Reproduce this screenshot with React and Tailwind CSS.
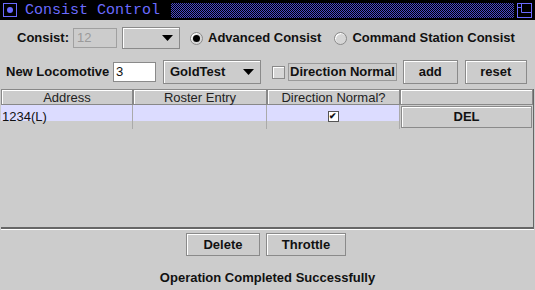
import React from 'react';

// raised swing-ish button
function Btn({ children, className = '' }) {
  return (
    <div className={`flex items-center justify-center border border-[#8a8a8a] shadow-[inset_1px_1px_0_#ffffff] bg-[#cccccc] font-bold text-[13px] text-[#111] ${className}`}>
      {children}
    </div>
  );
}

function Combo({ value, className = '' }) {
  return (
    <div className={`flex items-center justify-between border border-[#8a8a8a] shadow-[inset_1px_1px_0_#ffffff] bg-[#cccccc] pl-[6px] pr-[6px] ${className}`}>
      <span className="font-bold text-[13px] text-[#111]">{value}</span>
      <svg width="11" height="6" viewBox="0 0 11 6"><path d="M0 0h11L5.5 6z" fill="#000" /></svg>
    </div>
  );
}

function Radio({ checked }) {
  return (
    <div className="w-[13px] h-[13px] rounded-full border border-[#8a8a8a] bg-[#d6d6d6] shadow-[inset_1px_1px_0_#ffffff] flex items-center justify-center">
      {checked && <div className="w-[7px] h-[7px] rounded-full bg-black" />}
    </div>
  );
}

const cols = ['Address', 'Roster Entry', 'Direction Normal?', ''];

export default function App() {
  return (
    <div className="w-[535px] h-[290px] bg-[#cccccc] flex flex-col overflow-hidden font-['Liberation_Sans',sans-serif] text-[13px] text-[#111]">
      {/* title bar */}
      <div className="h-[20px] bg-black flex items-center shrink-0">
        <div className="ml-[3px] w-[14px] h-[14px] border border-[#6b6bff] flex items-center justify-center">
          <div className="w-[6px] h-[6px] rounded-full bg-[#6b6bff]" />
        </div>
        <span className="ml-[8px] w-[142px] font-['Liberation_Mono',monospace] text-[15px] leading-none text-[#6b6bff]">Consist Control</span>
        <div className="ml-[4px] flex-1 h-[15px] bg-[repeating-conic-gradient(#4646c8_0_25%,#000_0_50%)] bg-[length:2px_2px]" />
        <div className="mx-[2px] w-[17px] h-[17px] flex items-center justify-center">
          <svg width="15" height="15" viewBox="0 0 15 15">
            <rect x="0.5" y="0.5" width="14" height="14" fill="none" stroke="#6b6bff" />
            <path d="M4.5 0.5v9h10M0.5 4.5h4" fill="none" stroke="#6b6bff" />
          </svg>
        </div>
      </div>

      {/* consist row */}
      <div className="h-[36px] flex items-center shrink-0">
        <span className="ml-[17px] w-[56px] font-bold">Consist:</span>
        <div className="w-[44px] h-[20px] border border-[#a0a0a0] flex items-center pl-[3px] text-[#9a9a9a]">12</div>
        <Combo value="" className="ml-[5px] w-[58px] h-[22px]" />
        <div className="ml-[10px] flex items-center">
          <Radio checked />
          <span className="ml-[5px] font-bold">Advanced Consist</span>
        </div>
        <div className="ml-[13px] flex items-center">
          <Radio />
          <span className="ml-[5px] font-bold">Command Station Consist</span>
        </div>
      </div>

      {/* new locomotive row */}
      <div className="h-[32px] flex items-center shrink-0">
        <span className="ml-[6px] w-[107px] font-bold whitespace-nowrap">New Locomotive</span>
        <div className="w-[43px] h-[20px] border border-[#8a8a8a] bg-white flex items-center pl-[2px]">3</div>
        <Combo value="GoldTest" className="ml-[7px] w-[98px] h-[24px]" />
        <div className="ml-[11px] w-[13px] h-[13px] border border-[#8a8a8a] bg-[#d6d6d6] shadow-[inset_1px_1px_0_#ffffff]" />
        <span className="ml-[3px] px-[1px] border border-[#9a9a9a] font-bold leading-[16px] whitespace-nowrap">Direction Normal</span>
        <Btn className="ml-[6px] w-[55px] h-[24px]">add</Btn>
        <Btn className="ml-[7px] w-[62px] h-[24px]">reset</Btn>
      </div>

      {/* table */}
      <div className="mt-[1px] mx-[1px] h-[140px] shrink-0 border-b-2 border-b-[#666] border-r border-r-[#666] flex flex-col">
        <div className="grid grid-cols-[132px_134px_133px_1fr] h-[16px]">
          {cols.map((c, i) => (
            <div key={i} className="border border-[#888] shadow-[inset_1px_1px_0_#ffffff] flex items-center justify-center text-[13px] text-[#222] leading-none">{c}</div>
          ))}
        </div>
        <div className="grid grid-cols-[132px_134px_133px_1fr] h-[16px] bg-[#dcdcff]">
          <div className="pl-[1px] border-r border-[#aaa] flex items-center text-[13px] leading-none">1234(L)</div>
          <div className="border-r border-[#aaa]" />
          <div className="border-r border-[#aaa] flex items-center justify-center">
            <div className="w-[11px] h-[11px] border border-[#555] bg-white flex items-center justify-center text-[9px] leading-none font-bold">✔</div>
          </div>
          <div className="bg-[#cccccc] p-[1px]">
            <Btn className="h-full">DEL</Btn>
          </div>
        </div>
      </div>
      <div className="h-px bg-white mx-[1px]" />

      {/* buttons */}
      <div className="mt-[3px] flex justify-center gap-[6px] h-[23px] shrink-0">
        <Btn className="w-[74px] h-[23px] ml-[-3px]">Delete</Btn>
        <Btn className="w-[80px] h-[23px]">Throttle</Btn>
      </div>

      <div className="mt-[12px] text-center font-bold">Operation Completed Successfully</div>
    </div>
  );
}
